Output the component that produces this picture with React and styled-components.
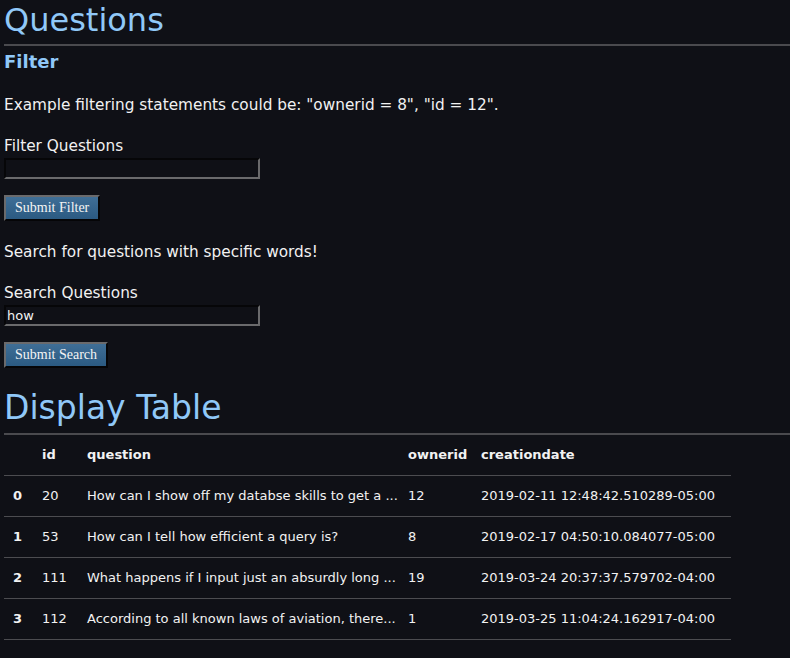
import React from "react";
import styled, { createGlobalStyle } from "styled-components";

const Global = createGlobalStyle`
  html, body {
    margin: 0;
    background: #0f1016;
  }
  body {
    padding: 0 4px;
    color: #f2f2f2;
    font-family: "DejaVu Sans", Verdana, sans-serif;
    font-size: 15.3px;
  }
`;

const Page = styled.div`
  display: flex;
  flex-direction: column;
`;

const Title = styled.h1`
  margin: 0 -4px 0 0;
  color: #90c8f8;
  font-size: ${(p) => p.$size || 32}px;
  font-weight: normal;
  line-height: 40px;
  padding-bottom: ${(p) => p.$pad || 4}px;
  border-bottom: 2px solid #4a4a4e;
`;

const SubTitle = styled.h3`
  margin: 4px 0 0;
  color: #90c8f8;
  font-size: 18px;
  font-weight: bold;
  line-height: 24px;
`;

const Text = styled.p`
  margin: 21px 0 0;
  line-height: 20px;
`;

const Form = styled.form`
  display: flex;
  flex-direction: column;
  align-items: flex-start;
  margin-top: 21px;
`;

const Label = styled.label`
  line-height: 20px;
`;

const Input = styled.input`
  box-sizing: border-box;
  width: 256px;
  height: 21px;
  margin-top: 2px;
  padding: 0 1px;
  background: #0f1016;
  color: #f2f2f2;
  font-family: "DejaVu Sans", Verdana, sans-serif;
  font-size: 13px;
  border: 2px solid;
  border-color: #060608 #6a6a6c #6a6a6c #060608;
  outline: none;
`;

const Button = styled.button`
  box-sizing: border-box;
  margin-top: 16px;
  height: 26px;
  padding: 0 9px;
  background: linear-gradient(#3f6e96, #2b5a82);
  color: #f4f4f4;
  font-family: "Liberation Serif", "Times New Roman", serif;
  font-size: 14px;
  border: 2px solid;
  border-color: #6a6a6c #050507 #050507 #6a6a6c;
`;

const Table = styled.table`
  width: 727px;
  table-layout: fixed;
  border-collapse: collapse;
  font-size: 13px;
`;

const Th = styled.th`
  box-sizing: border-box;
  width: ${(p) => p.$w}px;
  text-align: left;
  font-weight: bold;
  height: 40px;
  padding: 0 0 0 10px;
  border-bottom: 1px solid #4c4c50;
`;

const Td = styled.td`
  height: 40px;
  padding: 0 0 0 ${(p) => (p.$index ? 9 : 10)}px;
  border-bottom: 1px solid #4c4c50;
  white-space: nowrap;
  overflow: hidden;
  font-weight: ${(p) => (p.$index ? "bold" : "normal")};
`;

const Spacer = styled.div`
  height: ${(p) => p.$h}px;
`;

const COLUMNS = [
  ["", 28],
  ["id", 45],
  ["question", 321],
  ["ownerid", 73],
  ["creationdate", 260],
];

const ROWS = [
  ["20", "How can I show off my databse skills to get a ...", "12", "2019-02-11 12:48:42.510289-05:00"],
  ["53", "How can I tell how efficient a query is?", "8", "2019-02-17 04:50:10.084077-05:00"],
  ["111", "What happens if I input just an absurdly long ...", "19", "2019-03-24 20:37:37.579702-04:00"],
  ["112", "According to all known laws of aviation, there...", "1", "2019-03-25 11:04:24.162917-04:00"],
];

export default function App() {
  return (
    <Page>
      <Global />
      <Title>Questions</Title>
      <SubTitle>Filter</SubTitle>
      <Text>Example filtering statements could be: "ownerid = 8", "id = 12".</Text>
      <Form onSubmit={(e) => e.preventDefault()}>
        <Label>Filter Questions</Label>
        <Input type="text" />
        <Button type="submit">Submit Filter</Button>
      </Form>
      <Text>Search for questions with specific words!</Text>
      <Form onSubmit={(e) => e.preventDefault()}>
        <Label>Search Questions</Label>
        <Input type="text" defaultValue="how" />
        <Button type="submit">Submit Search</Button>
      </Form>
      <Spacer $h={20} />
      <Title $size={33} $pad={5}>Display Table</Title>
      <Table>
        <thead>
          <tr>
            {COLUMNS.map(([name, w]) => (
              <Th key={name} $w={w}>
                {name}
              </Th>
            ))}
          </tr>
        </thead>
        <tbody>
          {ROWS.map((r, i) => (
            <tr key={i}>
              <Td $index>{i}</Td>
              {r.map((c, j) => (
                <Td key={j}>{c}</Td>
              ))}
            </tr>
          ))}
        </tbody>
      </Table>
    </Page>
  );
}
